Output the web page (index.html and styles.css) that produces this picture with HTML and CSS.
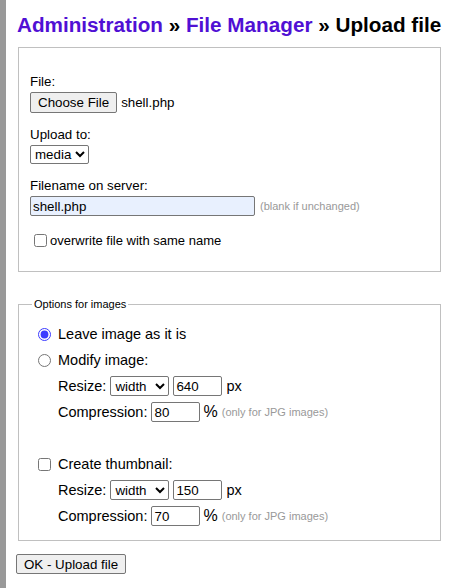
FILE: index.html
```html
<!DOCTYPE html>
<html>
<head>
<meta charset="utf-8">
<link rel="stylesheet" href="styles.css">
</head>
<body>
<div class="page">
  <h1 class="title"><a href="#" class="crumb">Administration</a> » <a href="#" class="crumb">File Manager</a> » Upload file</h1>
  <form class="form">
    <fieldset class="box main">
      <div class="field">
        <label class="lbl">File:</label>
        <div class="row"><button type="button" class="btn">Choose File</button><span class="fname">shell.php</span></div>
      </div>
      <div class="field">
        <label class="lbl">Upload to:</label>
        <div class="row"><select class="sel sel-media"><option>media</option></select></div>
      </div>
      <div class="field">
        <label class="lbl">Filename on server:</label>
        <div class="row"><input class="txt txt-name" type="text" value="shell.php"><span class="note">(blank if unchanged)</span></div>
      </div>
      <label class="check-row"><input type="checkbox" class="cb">overwrite file with same name</label>
    </fieldset>
    <fieldset class="box opts">
      <legend class="legend">Options for images</legend>
      <label class="opt"><input type="radio" name="m" class="rb" checked>Leave image as it is</label>
      <label class="opt"><input type="radio" name="m" class="rb">Modify image:</label>
      <div class="sub">Resize: <select class="sel sel-w"><option>width</option></select><input class="txt num num-r" type="text" value="640"><span class="unit">px</span></div>
      <div class="sub">Compression: <input class="txt num num-c" type="text" value="80"><span class="unit pct">%</span><span class="note small">(only for JPG images)</span></div>
      <label class="opt thumb"><input type="checkbox" class="cb cb2">Create thumbnail:</label>
      <div class="sub">Resize: <select class="sel sel-w"><option>width</option></select><input class="txt num num-r" type="text" value="150"><span class="unit">px</span></div>
      <div class="sub">Compression: <input class="txt num num-c" type="text" value="70"><span class="unit pct">%</span><span class="note small">(only for JPG images)</span></div>
    </fieldset>
    <div class="actions"><button type="button" class="btn submit">OK - Upload file</button></div>
  </form>
</div>
</body>
</html>
```
FILE: styles.css
```css
html, body {
  margin: 0;
  padding: 0;
  background: #fff;
}
body {
  font-family: "Liberation Sans", Arial, sans-serif;
  color: #000;
  border-left: 6px solid #999;
  min-height: 588px;
  box-sizing: border-box;
}
.page {
  padding: 10px 0 0 11px;
  width: 424px;
}
.title {
  font-size: 20.7px;
  font-weight: bold;
  margin: 0;
  line-height: 30px;
  white-space: nowrap;
}
.crumb {
  color: #5010d4;
  text-decoration: none;
}
.form {
  margin-top: 7px;
}
.box {
  border: 1px solid #c0c0c0;
  margin: 0 0 0 1px;
  padding: 0 11px;
  min-width: 0;
}
.main {
  padding-top: 26px;
  padding-bottom: 23px;
  display: flex;
  flex-direction: column;
  gap: 14px;
}
.field {
  display: flex;
  flex-direction: column;
  gap: 3px;
}
.lbl {
  font-size: 13.333px;
  line-height: 15px;
}
.row {
  display: flex;
  align-items: center;
  gap: 4px;
}
.btn {
  font-family: "Liberation Sans", Arial, sans-serif;
  font-size: 13.333px;
  height: 21px;
  padding: 1px 7px;
  border: 1px solid #767676;
  border-radius: 2px;
  background: #efefef;
  color: #000;
}
.fname {
  font-size: 13.333px;
}
.sel {
  font-family: "Liberation Sans", Arial, sans-serif;
  font-size: 13.333px;
  height: 19px;
  border: 1px solid #767676;
  border-radius: 2px;
  background: #fff;
  color: #000;
  padding: 0;
}
.sel-media {
  width: 59px;
}
.txt {
  font-family: "Liberation Sans", Arial, sans-serif;
  font-size: 13.333px;
  height: 20px;
  box-sizing: border-box;
  border: 1px solid #767676;
  border-radius: 2px;
  padding: 1px 2px;
  color: #000;
}
.txt-name {
  width: 225px;
  background: #e8f0fe;
}
.row .note {
  margin-left: 1px;
}
.note {
  font-size: 11px;
  color: #999;
}
.check-row {
  display: flex;
  align-items: center;
  font-size: 13px;
  height: 16px;
  margin-top: 2px;
  margin-left: 4px;
}
.cb {
  margin: 0 3px 0 0;
  width: 13px;
  height: 13px;
}
.opts {
  margin-top: 26px;
  padding-top: 11px;
  padding-bottom: 11px;
  display: flex;
  flex-direction: column;
}
.legend {
  font-size: 11px;
  padding: 0 2px;
  margin-left: 2px;
}
.opt {
  display: flex;
  align-items: center;
  font-size: 14.5px;
  height: 26px;
  margin-left: 7px;
}
.rb {
  margin: 0 7px 0 1px;
  width: 13px;
  height: 13px;
  accent-color: #3b3bff;
}
.cb2 {
  margin: 0 7px 0 1px;
}
.thumb {
  margin-top: 26px;
}
.sub {
  display: flex;
  align-items: center;
  font-size: 14.5px;
  height: 26px;
  margin-left: 28px;
  white-space: pre;
}
.sel-w {
  width: 59px;
  height: 20px;
  margin-right: 4px;
}
.num {
  width: 49px;
}
.unit {
  margin-left: 4px;
}
.pct {
  font-size: 16px;
  margin-left: 3px;
  margin-right: 4px;
}
.small {
  font-size: 11px;
}
.actions {
  margin-top: 13px;
}
.submit {
  margin-left: -1px;
  height: 20px;
  padding: 0 7px;
}
```
